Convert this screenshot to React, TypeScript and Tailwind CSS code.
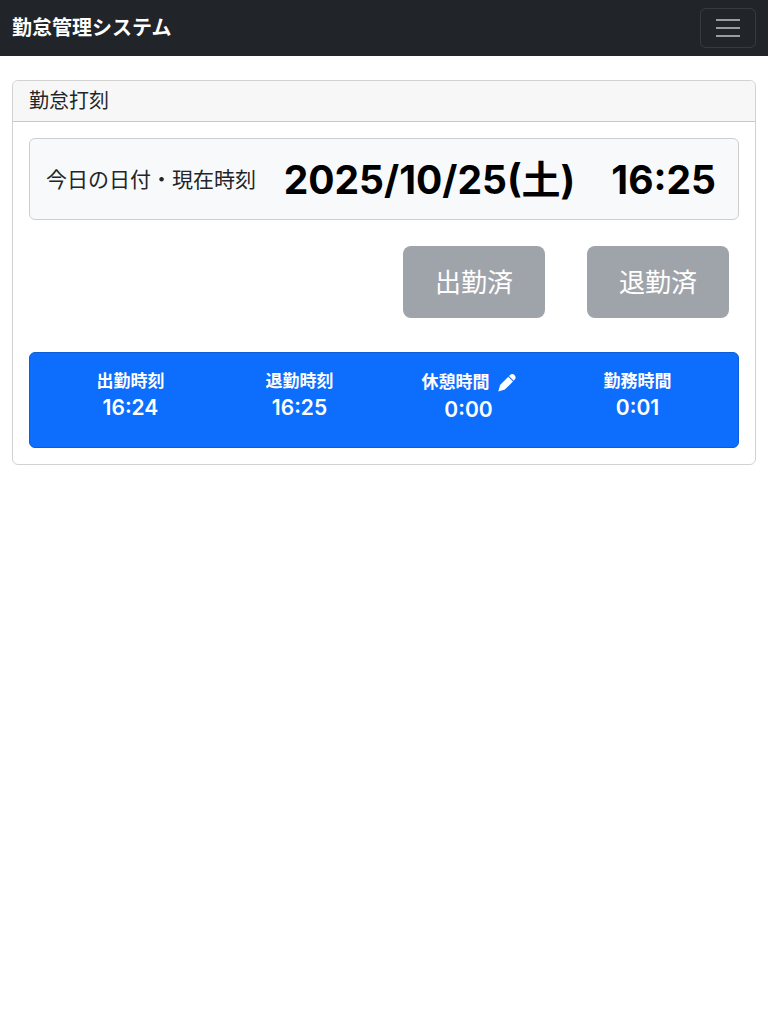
import { useState } from "react";

const records = [
  { label: "出勤時刻", time: "16:24", editable: false },
  { label: "退勤時刻", time: "16:25", editable: false },
  { label: "休憩時間", time: "0:00", editable: true },
  { label: "勤務時間", time: "0:01", editable: false },
];

function PencilIcon() {
  return (
    <svg viewBox="0 0 18 18" className="size-[18px]" fill="currentColor" aria-hidden="true">
      <path d="M0.3 17.6 2.1 10.9 10.3 2.7 15 7.4 6.8 15.6Z" />
      <path d="M11 2 12.4 0.7C13.6-0.4 15.3-0.1 16.5 1.1S18 4.1 16.9 5.3L15.7 6.7Z" />
    </svg>
  );
}

function Navbar() {
  const [open, setOpen] = useState(false);
  return (
    <nav className="flex items-center justify-between bg-[#212529] px-3 py-2">
      <a href="#" className="text-xl leading-[30px] font-bold text-white">
        勤怠管理システム
      </a>
      <button
        type="button"
        aria-label="メニュー"
        aria-expanded={open}
        onClick={() => setOpen(!open)}
        className="flex h-10 w-14 items-center justify-center rounded-md border border-white/10"
      >
        <svg viewBox="0 0 30 30" className="size-[30px]" fill="none" stroke="rgba(255,255,255,0.55)" strokeWidth="2" strokeMiterlimit="10">
          <path d="M3 7h24M3 15h24M3 23h24" />
        </svg>
      </button>
    </nav>
  );
}

function StampButton({ label }: { label: string }) {
  return (
    <button type="button" disabled className="h-[72px] w-[142px] rounded-lg bg-[#9fa4aa] pt-0.5 text-[26px] leading-10 text-white">
      {label}
    </button>
  );
}

export default function App() {
  return (
    <div className="min-h-screen bg-white font-['Inter','Noto_Sans_CJK_JP',sans-serif] text-[#212529]">
      <Navbar />
      <main className="px-3 pt-6">
        <section className="rounded-md border border-[#d2d2d3]">
          <h1 className="rounded-t-md border-b border-[#c9c9ca] bg-[#f7f7f7] px-4 py-1 text-xl leading-8">勤怠打刻</h1>
          <div className="p-4">
            <div className="flex h-[82px] items-center justify-between rounded-md border border-[#cdced0] bg-[#f8f9fa] pt-0.5 pr-[22px] pl-4">
              <span className="text-[21px] leading-8">今日の日付・現在時刻</span>
              <div className="flex gap-9 text-[39px] leading-[46px] font-bold text-black">
                <span>2025/10/25(土)</span>
                <span>16:25</span>
              </div>
            </div>
            <div className="flex justify-end gap-[42px] pt-[26px] pr-[10px] pb-[34px]">
              <StampButton label="出勤済" />
              <StampButton label="退勤済" />
            </div>
            <dl className="grid h-24 grid-cols-4 rounded-md border border-[#0b5ed7] bg-[#0d6efd] p-4 text-center text-white">
              {records.map((record) => (
                <div key={record.label}>
                  <dt className="flex items-center justify-center gap-2 text-[17px] leading-[25px] font-bold">
                    {record.label}
                    {record.editable && (
                      <button type="button" aria-label="休憩時間を編集" className="flex h-[27px] items-center">
                        <PencilIcon />
                      </button>
                    )}
                  </dt>
                  <dd className="text-[21px] leading-7 font-semibold">{record.time}</dd>
                </div>
              ))}
            </dl>
          </div>
        </section>
      </main>
    </div>
  );
}
